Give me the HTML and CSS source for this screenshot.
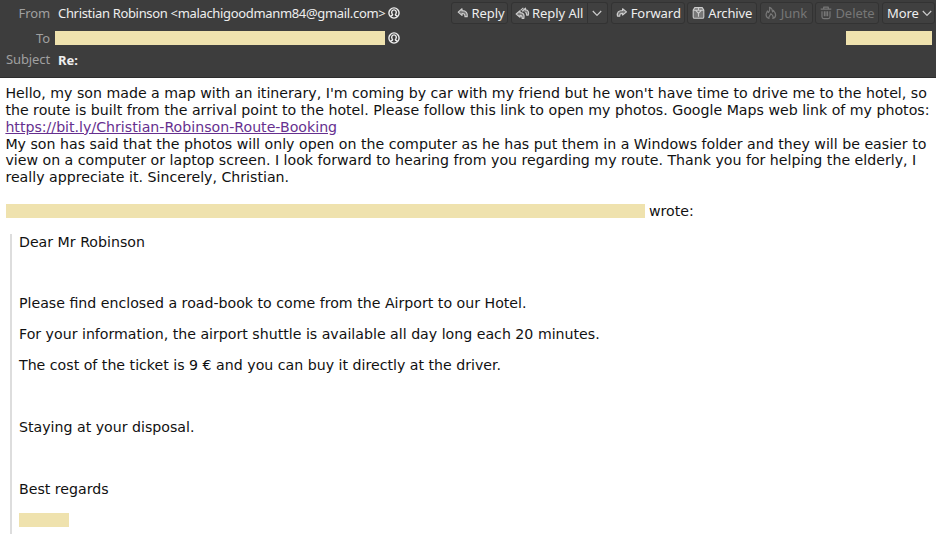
FILE: index.html
```
<!DOCTYPE html>
<html lang="en">
<head>
<meta charset="utf-8">
<title>Re:</title>
<link rel="stylesheet" href="styles.css">
</head>
<body>
<svg class="defs" width="0" height="0" aria-hidden="true">
  <symbol id="contact" viewBox="0 0 12 12"><circle cx="6" cy="6" r="5.1"/><path d="M4.3 7.1C2.9 5 4 2.9 6 2.9S9.1 5 7.7 7.1M4.5 6.9v1.2L2.7 9.2M7.5 6.9v1.2l1.8 1.1"/></symbol>
  <symbol id="reply" viewBox="0 0 12 12"><path class="shade" d="M5 1.8 1.2 5.1 5 8.4V6.5c2.4-.1 3 .9 3 3.2h2.2c.6-3.8-1-6-5.2-6z"/></symbol>
  <symbol id="replyall" viewBox="0 0 15 13"><path class="shade" d="M5 3.8 1.2 7 5 10.2V8.4c1.6 0 2.2.9 2.1 3h1.8C9.6 7.8 8.6 5.6 5 5.6z"/><path class="shade" d="m7.2 4.2 3.3-3v1.7c2.8.2 3.6 2.2 2.8 5.2h-1.7c.1-1.9-.3-2.6-1.3-2.7"/><path d="M5.6 3.4 8.4.9"/></symbol>
  <symbol id="forward" viewBox="0 0 12 12"><path class="shade" d="m6.6 1.8 3.9 3.1-3.9 3.1V6.3c-2-.1-2.9.7-2.9 2.9H1.5C.8 5.5 2.5 3.5 6.6 3.5z"/></symbol>
  <symbol id="archive" viewBox="0 0 14 14"><path class="shade" d="M3 1.2h8l1.7 2.7v7.3q0 1.5-1.5 1.5H2.8q-1.5 0-1.5-1.5V3.9z"/><path d="M1.3 4.1h11.4M4 4.2l3 3.2 3-3.2M7 1.4v2.5M7 7.3V11"/></symbol>
  <symbol id="junk" viewBox="0 0 12 14"><path d="M4 12.5C1.4 11.6.8 9.6 1.3 7.6c.3-1.1.8-1.8 1.2-2.6.3.7.5 1.2 1 1.5C5 4.8 4.9 3 4.5 1.3c2.2.8 3.1 2.5 3.1 4.6.5-.4.7-.9.8-1.5 2.8 3.2 3.3 6.7-.6 8.1 1-2-.1-3.5-1.9-4.9 0 1.7-2.7 2.5-1.9 4.9z"/></symbol>
  <symbol id="trash" viewBox="0 0 12 14"><path d="M.7 3.2h10.6M3.7 3V1.2h4.6V3M2 5.2v5.6q0 1.8 1.8 1.8h4.4q1.8 0 1.8-1.8V5.2M4.4 5.3v5M6 5.3v5M7.6 5.3v5"/></symbol>
  <symbol id="chevron" viewBox="0 0 10 7"><path d="m.8 1 4.2 4.4L9.2 1"/></symbol>
</svg>
<header class="header">
  <div class="row row-from">
    <span class="label">From</span>
    <span class="sender">Christian Robinson &lt;malachigoodmanm84@gmail.com&gt;</span>
    <svg class="contact"><use href="#contact"/></svg>
    <nav class="toolbar">
      <button class="btn reply"><svg><use href="#reply"/></svg><span>Reply</span></button>
      <div class="split">
        <button class="btn replyall"><svg><use href="#replyall"/></svg><span>Reply All</span></button>
        <button class="btn drop" aria-label="Reply options"><svg class="chevron"><use href="#chevron"/></svg></button>
      </div>
      <button class="btn forward"><svg><use href="#forward"/></svg><span>Forward</span></button>
      <button class="btn archive"><svg><use href="#archive"/></svg><span>Archive</span></button>
      <button class="btn junk" disabled><svg><use href="#junk"/></svg><span>Junk</span></button>
      <button class="btn delete" disabled><svg><use href="#trash"/></svg><span>Delete</span></button>
      <button class="btn more"><span>More</span><svg class="chevron"><use href="#chevron"/></svg></button>
    </nav>
  </div>
  <div class="row row-to">
    <span class="label">To</span>
    <span class="redacted recipient"></span>
    <svg class="contact"><use href="#contact"/></svg>
    <span class="redacted date"></span>
  </div>
  <div class="row row-subject">
    <span class="label subject-label">Subject</span>
    <strong class="subject">Re:</strong>
  </div>
</header>
<main class="message">
  <p class="body-text">Hello, my son made a map with an itinerary, I'm coming by car with my friend but he won't have time to drive me to the hotel, so<br>the route is built from the arrival point to the hotel. Please follow this link to open my photos. Google Maps web link of my photos:<br><a href="#">https://bit.ly/Christian-Robinson-Route-Booking</a><br>My son has said that the photos will only open on the computer as he has put them in a Windows folder and they will be easier to<br>view on a computer or laptop screen. I look forward to hearing from you regarding my route. Thank you for helping the elderly, I<br>really appreciate it. Sincerely, Christian.</p>
  <div class="wrote"><span class="redacted author"></span><span>wrote:</span></div>
  <blockquote>
    <p>Dear Mr Robinson</p>
    <p>&nbsp;</p>
    <p>Please find enclosed a road-book to come from the Airport to our Hotel.</p>
    <p>For your information, the airport shuttle is available all day long each 20 minutes.</p>
    <p>The cost of the ticket is 9 € and you can buy it directly at the driver.</p>
    <p>&nbsp;</p>
    <p>Staying at your disposal.</p>
    <p>&nbsp;</p>
    <p>Best regards</p>
    <div class="redacted signature"></div>
  </blockquote>
</main>
</body>
</html>
```
FILE: styles.css
```
* { box-sizing: border-box; }
body {
  margin: 0;
  height: 534px;
  overflow: hidden;
  background: #fff;
  color: #111;
  font: 14.17px/16.85px "DejaVu Sans", sans-serif;
}
.defs { display: block; width: 0; height: 0; }
svg { fill: none; stroke: currentColor; stroke-width: 1.2; flex: none; stroke-linejoin: round; }
.shade { fill: #777; }
.header {
  height: 78px;
  padding-top: 2px;
  background: #3d3d3d;
  border-bottom: 1px solid #2d2d2d;
  color: #eee;
  font: 13px/20px "Noto Sans", sans-serif;
}
.row { display: flex; align-items: center; white-space: nowrap; }
.row-from { height: 22px; }
.row-to { height: 27px; padding-top: 1px; }
.row-subject { height: 18px; }
.label { width: 50px; margin-right: 8px; text-align: right; color: #a0a0a0; letter-spacing: -0.1px; }
.subject-label { margin-top: -2px; }
.sender { width: 330px; letter-spacing: -0.33px; }
.contact { width: 12px; height: 12px; stroke-width: 1.4; }
.redacted { display: block; height: 14px; background: #efe2ae; }
.recipient { width: 330px; margin: 0 3px 0 -3px; }
.date { width: 86px; margin: 0 4px 0 auto; }
.subject { margin-top: -1px; }
.toolbar { display: flex; gap: 2.6px; margin: 0 1px 0 auto; }
.btn {
  display: flex;
  align-items: center;
  gap: 2px;
  height: 22px;
  padding: 0 0 0 5px;
  border: 1px solid #333;
  border-radius: 3px;
  background: #404040;
  color: #eee;
  font: inherit;
  letter-spacing: -0.05px;
  white-space: nowrap;
}
.btn svg { width: 12px; height: 12px; color: #ccc; }
.btn:disabled, .btn:disabled svg { color: #777; }
.btn svg.chevron { width: 10px; height: 7px; }
.reply { width: 57px; }
.split { display: flex; }
.replyall { width: 77px; padding-left: 3px; border-radius: 3px 0 0 3px; }
.btn.replyall svg { width: 15px; height: 13px; }
.drop { width: 20px; padding-left: 4px; border-left: 0; border-radius: 0 3px 3px 0; }
.forward { width: 74px; padding-left: 4px; gap: 3px; }
.archive { width: 70px; padding-left: 4px; gap: 3px; letter-spacing: -0.15px; }
.btn.archive svg { width: 13px; height: 14px; }
.junk { width: 53px; padding-left: 4px; gap: 4px; }
.btn.junk svg, .btn.delete svg { height: 14px; }
.delete { width: 64px; padding-left: 4px; gap: 3px; }
.more { width: 53px; padding-left: 4px; gap: 3px; }
.message { padding: 7px 0 0 5px; white-space: nowrap; }
.body-text { margin: 0; padding-left: 0.4px; }
a { color: #66308f; text-decoration: underline; }
.wrote { display: flex; align-items: center; gap: 4px; margin-top: 16.9px; height: 17px; }
.author { width: 639px; margin-left: 1px; }
blockquote { margin: 13.6px 0 0 5px; padding-left: 7px; border-left: 2px solid #ddd; height: 310px; }
blockquote p { margin: 0 0 14.1px; }
.signature { width: 50px; margin-top: 15px; }
```
